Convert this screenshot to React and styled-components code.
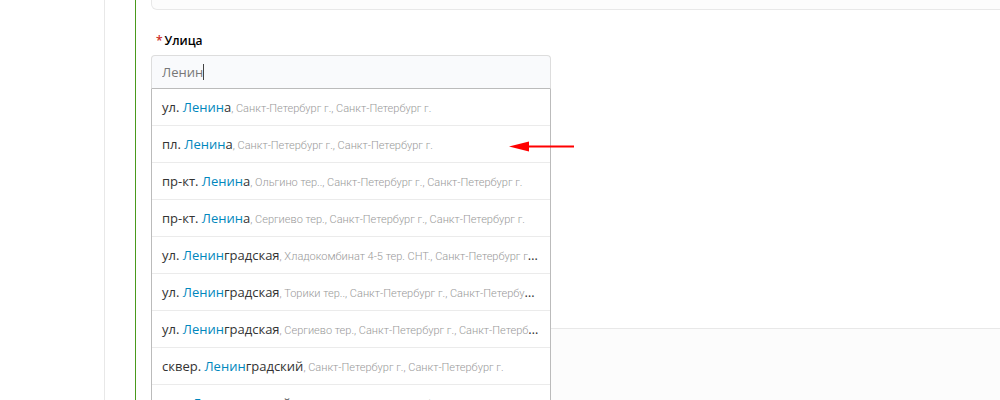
import { useState } from 'react';
import styled, { createGlobalStyle } from 'styled-components';

const GlobalStyle = createGlobalStyle`
    * {
        box-sizing: border-box;
    }
    body {
        margin: 0;
        background: #ffffff;
        color: #222222;
        font-family: "Open Sans", "Noto Sans", sans-serif;
        font-size: 13px;
    }
`

export const Page = styled.div`
    display: flex;
    height: 100vh;
    overflow: hidden;
`

export const Sidebar = styled.aside`
    flex: 0 0 105px;
    border-right: 1px solid #e8e8e8;
`

export const Main = styled.main`
    flex: 1;
    min-width: 0;
    margin-left: 30px;
    padding-left: 15px;
    border-left: 1px solid #4a9a1d;
    overflow: hidden;
`

export const Panel = styled.section`
    height: ${(props) => props.$height};
    margin-right: -10px;
    border: 1px solid #e8e8e8;
    border-width: ${(props) => props.$border || '1px'};
    border-radius: ${(props) => props.$radius};
    background: #fcfcfc;
`

export const Field = styled.div`
    width: 400px;
    max-width: 100%;
    padding-top: 21px;
    margin-bottom: 239px;
`

export const Label = styled.label`
    display: block;
    padding: 0 5px;
    line-height: 20px;
    margin-bottom: 4px;
    color: #000000;
    font-size: 12px;
    font-weight: 600;
`

export const Required = styled.span`
    margin-right: 2px;
    color: #cc2a1e;
`

export const Combo = styled.div`
    position: relative;
`

export const Input = styled.input`
    display: block;
    width: 100%;
    height: 34px;
    padding: 0 10px;
    border: 1px solid #dddddd;
    border-bottom-color: #bbbbbb;
    border-radius: 4px 4px 0 0;
    outline: none;
    background: #f9fafc;
    color: #777777;
    font: inherit;
`

export const Caret = styled.span`
    position: absolute;
    top: 9px;
    left: 52px;
    width: 1px;
    height: 16px;
    background: #444444;
`

export const List = styled.ul`
    position: absolute;
    top: 100%;
    left: 0;
    right: 0;
    margin: 0;
    padding: 0;
    border: 1px solid #bbbbbb;
    border-top: none;
    background: #ffffff;
    list-style: none;
`

export const Item = styled.li`
    position: relative;
    border-bottom: 1px solid #ebebeb;
`

export const Option = styled.button`
    display: block;
    width: 100%;
    height: 36px;
    padding: 0 10px;
    border: none;
    background: none;
    color: #333333;
    font: inherit;
    line-height: 36px;
    text-align: left;
    white-space: nowrap;
    overflow: hidden;
    text-overflow: ellipsis;
    cursor: pointer;
`

export const Match = styled.span`
    color: #0087bd;
    font-weight: 500;
`

export const Region = styled.span`
    color: #999999;
    font-family: Roboto, "Open Sans", sans-serif;
    font-size: 11px;
    font-weight: 300;
`

export const Arrow = styled.svg`
    position: absolute;
    top: 14px;
    right: -24px;
    width: 65px;
    height: 12px;
`

const streets = [
    { type: 'ул.', rest: 'а', region: 'Санкт-Петербург г., Санкт-Петербург г.' },
    { type: 'пл.', rest: 'а', region: 'Санкт-Петербург г., Санкт-Петербург г.', marked: true },
    { type: 'пр-кт.', rest: 'а', region: 'Ольгино тер.., Санкт-Петербург г., Санкт-Петербург г.' },
    { type: 'пр-кт.', rest: 'а', region: 'Сергиево тер., Санкт-Петербург г., Санкт-Петербург г.' },
    { type: 'ул.', rest: 'градская', region: 'Хладокомбинат 4-5 тер. СНТ., Санкт-Петербург г., Санкт-Петербург г.' },
    { type: 'ул.', rest: 'градская', region: 'Торики тер.., Санкт-Петербург г., Санкт-Петербург г.' },
    { type: 'ул.', rest: 'градская', region: 'Сергиево тер., Санкт-Петербург г., Санкт-Петербург г.' },
    { type: 'сквер.', rest: 'градский', region: 'Санкт-Петербург г., Санкт-Петербург г.' },
    { type: 'пер.', rest: 'градский', region: 'Торики тер.., Санкт-Петербург г., Санкт-Петербург г.' },
];

function StreetItem({ type, rest, region, marked, onPick }) {
    return (
        <Item>
            <Option type="button" onClick={() => onPick('Ленин' + rest)}>
                {type} <Match>Ленин</Match>{rest}<Region>, {region}</Region>
            </Option>
            {marked && (
                <Arrow viewBox="0 0 65 12" aria-hidden="true">
                    <path d="M18 6.5H65" stroke="#ff0000" strokeWidth="2" />
                    <path d="M0 6.5L20 1.5V11.5Z" fill="#ff0000" />
                </Arrow>
            )}
        </Item>
    )
}

export default function App() {
    const [value, setValue] = useState('Ленин');

    return (
        <>
            <GlobalStyle />
            <Page>
                <Sidebar />
                <Main>
                    <Panel $height="10px" $border="0 1px 1px" $radius="0 0 6px 6px" />
                    <Field>
                        <Label htmlFor="street"><Required>*</Required>Улица</Label>
                        <Combo>
                            <Input id="street" autoComplete="off" value={value} onChange={(e) => setValue(e.target.value)} />
                            <Caret />
                            <List>
                                {streets.map((street, i) => (
                                    <StreetItem key={i} {...street} onPick={setValue} />
                                ))}
                            </List>
                        </Combo>
                    </Field>
                    <Panel $height="200px" $radius="0" />
                </Main>
            </Page>
        </>
    )
}
